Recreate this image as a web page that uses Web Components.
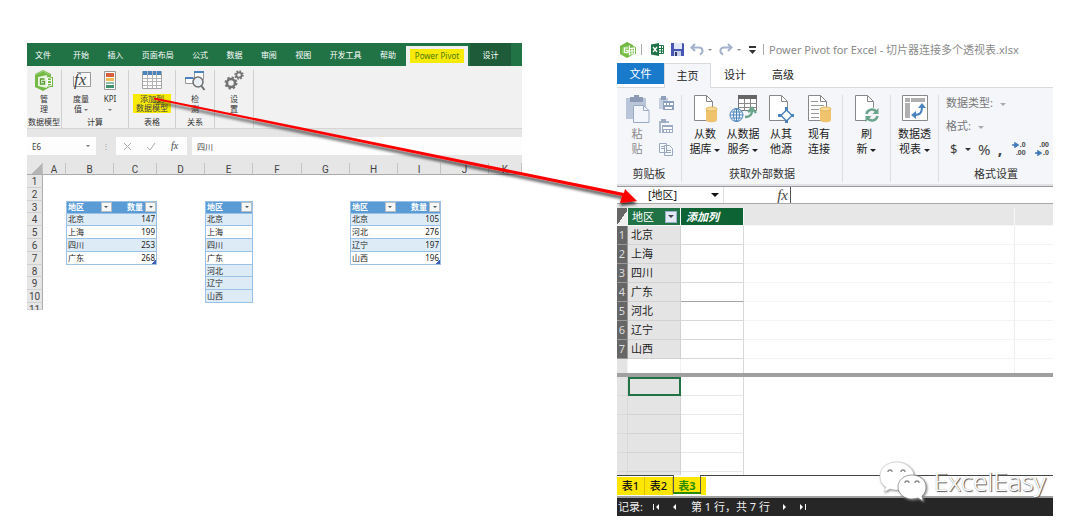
<!DOCTYPE html>
<html lang="zh-CN">
<head>
<meta charset="utf-8">
<title>Power Pivot</title>
<style>
body{margin:0;background:#fff;color:#333;font-family:"Noto Sans","Noto Sans CJK SC",sans-serif;font-size:11px}
</style>
</head>
<body>
<demo-page></demo-page>
<script>
const define=(name,html,init)=>customElements.define(name,class extends HTMLElement{
  constructor(){super();const t=document.createElement('template');t.innerHTML=html;this.attachShadow({mode:'open'}).append(t.content.cloneNode(true));}
  connectedCallback(){if(init)init(this,this.shadowRoot);}
});

/* small drop-down triangle */
define('drop-caret',`<style>:host{display:inline-block;vertical-align:middle;width:0;height:0;border:var(--caret,3px) solid transparent;border-top-color:currentColor;border-bottom-width:0}</style>`);

/* ribbon group: items above, caption below, separator on the right */
define('ribbon-group',`<style>
:host{display:flex;flex-direction:column;box-sizing:border-box;border-right:1px solid var(--sep,#dcdee0);flex:none}
:host([last]){border-right:0;flex:1}
.items{flex:1;display:flex;justify-content:center}
.cap{text-align:center;line-height:var(--cap,14px);white-space:nowrap;margin:0 -4px}
</style><div class="items"><slot></slot></div><div class="cap"><slot name="caption"></slot></div>`);

/* large ribbon command: icon over a two-line label */
define('ribbon-button',`<style>
:host{display:block;flex:none}
button{all:unset;box-sizing:border-box;width:100%;display:flex;flex-direction:column;align-items:center;cursor:pointer}
.ic{height:var(--icon,31px);display:flex;align-items:flex-start;justify-content:center}
.tx{text-align:center;line-height:var(--line,15px);white-space:nowrap}
</style><button><span class="ic"><slot name="icon"></slot></span><span class="tx"><slot></slot></span></button>`);

/* banded table with filter buttons */
define('sheet-table',`<style>
:host{display:block;font-size:8px;line-height:10px;color:#222;z-index:1}
table{width:100%;height:100%;border-collapse:collapse;table-layout:fixed;border:1px solid #9bc2e6}
th,td{padding:0 1px;text-align:left;border-bottom:1px solid #9bc2e6;white-space:nowrap;overflow:hidden;height:11px}
th{background:#5b9bd5;color:#fff;font-weight:700;padding-right:0}
th div{display:flex;align-items:center;justify-content:space-between}
.n{text-align:right}
th.n div{justify-content:flex-end;gap:2px}
tbody tr:nth-child(odd) td{background:#ddebf7}
:host([added]) tbody tr:nth-child(n+5) td{background:#ddebf7}
button{all:unset;width:11px;height:10px;background:#f7f7f7;border:1px solid #b5bcc4;box-sizing:border-box;display:flex;align-items:center;justify-content:center;color:#555;--caret:2px}
tbody tr:last-child td:last-child{background-image:linear-gradient(135deg,transparent 50%,#3f5fb5 50%);background-size:4px 4px;background-position:right bottom;background-repeat:no-repeat}
</style><table><thead><tr></tr></thead><tbody></tbody></table>`,(el,r)=>{
  r.querySelector('thead tr').innerHTML=el.getAttribute('head').split(',').map((h,i)=>`<th class="${i?'n':''}"><div><span>${h}</span><button aria-label="筛选${h}"><drop-caret></drop-caret></button></div></th>`).join('');
  r.querySelector('tbody').innerHTML=el.getAttribute('rows').split(' ').map(x=>'<tr>'+x.split(':').map((c,i)=>`<td class="${i?'n':''}">${c}</td>`).join('')+'</tr>').join('');
});

define('excel-window',`<style>
:host{display:block;font-size:8px;line-height:10px;min-width:0;background:#fff}
button{all:unset;cursor:pointer;white-space:nowrap}
.tabs{display:flex;height:23px;background:#217346;color:#fff;align-items:stretch}
.tabs button{display:flex;align-items:center}
.file{width:32px;justify-content:center}
nav{flex:1;display:flex;justify-content:space-between;padding:0 10px 0 14px}
.tabs .pp{box-sizing:border-box;width:62px;margin-top:3px;background:#f1f1f1;justify-content:center;color:#4f7a00}
.pp span{background:#f7ea06;padding:2px 5px}
.tabs .ds{width:41px;margin:0 11px 0 2px;background:#1e5b39;justify-content:center}
.ribbon{display:flex;height:63px;box-sizing:border-box;background:#f1f1f1;border-bottom:1px solid #d5d5d5;padding:4px 0 0;--icon:24px;--line:10px;--caret:2px;--cap:12px;--sep:#d0d0d0}
ribbon-group drop-caret{color:#777}
mark{display:block;background:#f7ea06;color:#444;padding:0 3px 1px;line-height:9px}
.bar{background:#e6e6e6;padding:8px 0;display:grid;grid-template-columns:69px 10px 71px minmax(0,1fr);column-gap:5px;height:34px;box-sizing:border-box}
.bar>*{min-width:0}
.nm,.val,.ops{background:#fdfdfd;display:flex;align-items:center;color:#444}
input{all:unset;width:100%;min-width:0;height:18px;padding-left:5px;box-sizing:border-box}
.nm drop-caret{margin-right:6px;--caret:2px;color:#777}
.ops{justify-content:space-around}
.dots{display:flex;align-items:center;justify-content:center;color:#999}
.sheet{display:grid;grid-template-columns:16fr 23fr 48fr 43fr 48fr 48fr 49fr 48fr 48fr 43fr 48fr 33fr;grid-template-rows:12px repeat(10,minmax(0,1fr)) 7px;height:147px;overflow:hidden}
.c,.r{background:#e6e6e6;color:#444;font:10px/13px Roboto,sans-serif;text-align:center;box-sizing:border-box}
.c{grid-row:1;border-right:1px solid #c3c3c3;border-bottom:1px solid #ababab}
.r{grid-column:1;border-right:1px solid #ababab;border-bottom:1px solid #cfcfcf}
.corner{background:linear-gradient(135deg,#e6e6e6 60%,#b5b5b5 60%)}
</style>
<div class="tabs"><button class="file">文件</button><nav>${'开始 插入 页面布局 公式 数据 审阅 视图 开发工具 帮助'.split(' ').map(t=>`<button>${t}</button>`).join('')}</nav><button class="pp"><span>Power Pivot</span></button><button class="ds">设计</button></div>
<div class="ribbon">
<ribbon-group style="width:35px"><ribbon-button><svg slot="icon" width="20" height="21" viewBox="0 0 20 21"><path d="M9 0 17 4v3h2v10h-3l-7 4-8-4V4z" fill="#73b944"/><path d="M1 5 9 1l7 4" stroke="#a4d583" fill="none"/><path d="M4 7l9-2v13l-9-2z" fill="#e9f4e1"/><path d="M10.500 9H6.500v5h4v-2.500H8" stroke="#5a9c34" stroke-width="1.300" fill="none"/><path d="M13.500 7.500l4 .8v7l-4 1zM13.500 10.500h4M13.500 13.500h4" stroke="#fff" fill="none"/></svg>管<br>理</ribbon-button><span slot="caption">数据模型</span></ribbon-group>
<ribbon-group style="width:67px"><ribbon-button style="width:30px"><svg slot="icon" width="19" height="20" viewBox="0 0 19 20"><path d="M5 2.500h13.500v14H1.500V6" stroke="#999" fill="#fafafa"/><text x="2" y="15" font-family="Liberation Serif" font-style="italic" font-size="17" fill="#444">fx</text></svg>度量<br>值 <drop-caret></drop-caret></ribbon-button><ribbon-button style="width:28px"><svg slot="icon" width="14" height="21" viewBox="0 0 14 21"><path d="M1.500 1.500h11v18h-11z" fill="#fff" stroke="#999"/><path d="M3 3h8v4H3z" fill="#d9603f"/><path d="M3 8h8v3H3z" fill="#efbb55"/><path d="M3 12h8v2H3z" fill="#8abfa5"/><path d="M3 15h8v3H3z" fill="#3f9170"/></svg>KPI<br><drop-caret></drop-caret></ribbon-button><span slot="caption">计算</span></ribbon-group>
<ribbon-group style="width:47px"><ribbon-button><svg slot="icon" width="20" height="20" viewBox="0 0 20 20"><path d="M.5 1.500h19v17H.5z" fill="#fff" stroke="#a4a4a4"/><path d="M1 1h18v4H1z" fill="#4b84bd"/><path d="M5.500 1v17M10.500 1v17M14.500 1v17M1 8.500h18M1 11.500h18M1 15.500h18" stroke="#b5b5b5"/></svg><mark>添加到<br>数据模型</mark></ribbon-button><span slot="caption">表格</span></ribbon-group>
<ribbon-group style="width:39px"><ribbon-button><svg slot="icon" width="22" height="21" viewBox="0 0 22 21"><path d="M10.500 1.500h9v8h-9zM1.500 7.500h8v6h-8z" fill="#fff" stroke="#999"/><path d="M10 1h10v2H10zM1 7h8v2H1z" fill="#4b84bd"/><circle cx="14" cy="12" r="5" fill="#e9f0f5" stroke="#707070" stroke-width="1.500"/><path d="m17.500 16 3 4" stroke="#707070" stroke-width="2"/></svg>检<br>测</ribbon-button><span slot="caption">关系</span></ribbon-group>
<ribbon-group style="width:39px"><ribbon-button><svg slot="icon" width="20" height="20" viewBox="0 0 20 20" fill="none" stroke="#737373"><circle cx="7" cy="13" r="4" stroke-width="2.500"/><circle cx="7" cy="13" r="5.500" stroke-width="2" stroke-dasharray="2.200 2.120"/><circle cx="15" cy="5" r="2.700" stroke-width="1.800"/><circle cx="15" cy="5" r="4" stroke-width="1.500" stroke-dasharray="1.600 1.540"/></svg>设<br>置</ribbon-button></ribbon-group>
</div>
<div class="bar"><label class="nm"><input value="E6" aria-label="名称框"><drop-caret></drop-caret></label><span class="dots">⋮</span><div class="ops"><svg width="9" height="9" stroke="#aaa" fill="none"><path d="m1 1 7 7M8 1 1 8"/></svg><svg width="10" height="9" stroke="#aaa" fill="none"><path d="m1 5 3 3 5-7"/></svg><svg width="10" height="12"><text x="1" y="9" font-family="Liberation Serif" font-style="italic" font-size="10" fill="#444">fx</text></svg></div><label class="val"><input value="四川" aria-label="编辑栏"></label></div>
<div class="sheet"><div class="c corner"></div>${[...'ABCDEFGHIJK'].map((c,i)=>`<div class="c" style="grid-column:${i+2}">${c}</div>`).join('')}${[1,2,3,4,5,6,7,8,9,10,11].map(n=>`<div class="r" style="grid-row:${n+1}">${n}</div>`).join('')}
<sheet-table style="grid-area:4/3/9/5" head="地区,数量" rows="北京:147 上海:199 四川:253 广东:268"></sheet-table>
<sheet-table added style="grid-area:4/6/12/7" head="地区" rows="北京 上海 四川 广东 河北 辽宁 山西"></sheet-table>
<sheet-table style="grid-area:4/9/9/11" head="地区,数量" rows="北京:105 河北:276 辽宁:197 山西:196"></sheet-table></div>`);

const page='<path d="M1.500 .5h12l6 6v19h-18z" fill="#fff" stroke="#888"/><path d="M13.500 .5v6h6" fill="none" stroke="#888"/>';
const drum='<path d="M13 14v11c0 3 11 3 11 0V14z" fill="#efc36d"/><ellipse cx="18.500" cy="14" rx="5.500" ry="2" fill="#f7d997" stroke="#e5b455"/>';

define('pivot-ribbon',`<style>
:host{display:flex;height:97px;box-sizing:border-box;background:#f4f6f9;border-top:1px solid #d9dbde;padding:7px 0 2px}
ribbon-group{--cap:16px}
ribbon-button{color:#222}
.off{color:#888}
.small{display:flex;flex-direction:column;gap:7px;padding-top:1px;margin-left:8px}
button{all:unset;cursor:pointer;display:block}
.small button{height:16px}
.fmt{flex:1;padding:0 7px;line-height:16px;color:#777}
.fmt button{white-space:nowrap}
.fmt .row{display:flex;align-items:center;justify-content:space-between;height:16px;color:#444;font-size:13px;margin:7px -3px 0 4px}
.fmt .f1{margin-bottom:7px}
.fmt drop-caret{--caret:3px;margin-left:4px;color:#aaa}
.fmt .row drop-caret{margin:0;color:#333}
.row .pct{font-size:15px}
.row .comma{font-size:16px}
.dec{display:grid;grid-template-columns:auto auto;font:700 7px/8px "Liberation Sans",sans-serif;justify-content:end;align-items:center;width:16px}
.dec .w{grid-column:1/3;text-align:right}
</style>
<ribbon-group style="width:65px"><ribbon-button class="off"><svg slot="icon" width="25" height="29" viewBox="0 0 25 29"><path d="M1 3h20v21H1z" fill="#b9c6da"/><path d="M5 2h4V0h5v2h4v5H5z" fill="#8c9bb3"/><path d="M8.500 10.500h10l5.500 5v12H8.500z" fill="#f2f6fc" stroke="#9baac4"/><path d="M18.500 10.500v5H24" fill="none" stroke="#9baac4"/></svg>粘<br>贴</ribbon-button><div class="small">
<button aria-label="粘贴追加"><svg width="16" height="15"><path d="M1 2h9v11H1z" fill="#c3cede"/><path d="M3 0h5v4H3zM5 5h11v9H5z" fill="#8fa0ba"/><path d="M6 7h2v2H6zM9 7h2v2H9zM12 7h3v2h-3zM7 11h7v2H7z" fill="#fff"/></svg></button>
<button aria-label="粘贴替换"><svg width="16" height="15"><path d="M1 2h2v12H1zM1 2h10v2H1z" fill="#a9b6cb"/><path d="M3 0h5v4H3zM4 6h11v8H4z" fill="#9cabc2"/><path d="M5 8h9v2H5zM6 11h2v2H6zM9 11h2v2H9zM12 11h2v2h-2z" fill="#fff"/></svg></button>
<button aria-label="复制"><svg width="16" height="15" fill="#f5f8fc" stroke="#9aa9c0"><path d="M1.500 1.500h7v9h-7zM6.500 3.500h5l3 3v7h-8z"/><path d="M8 8.500h5M8 10.500h5M3 4.500h3M3 6.500h3"/></svg></button></div><span slot="caption">剪贴板</span></ribbon-group>
<ribbon-group style="width:161px"><ribbon-button style="width:38px"><svg slot="icon" width="25" height="28" viewBox="0 0 25 28">${page}${drum}</svg>从数<br>据库 <drop-caret></drop-caret></ribbon-button>
<ribbon-button style="width:38px"><svg slot="icon" width="29" height="28" viewBox="0 0 29 28"><path d="M9.500 .5h18v15h-18z" fill="#fff" stroke="#777"/><path d="M9 0h19v4H9z" fill="#666"/><path d="M15.500 4v12M21.500 4v12M10 8.500h18M10 12.500h18" stroke="#888"/><circle cx="7.500" cy="20" r="6.500" fill="#f4f8fc" stroke="#4b84bd"/><ellipse cx="7.500" cy="20" rx="3" ry="6.500" fill="none" stroke="#4b84bd"/><path d="M1 20h13M2 17h11M2 23h11M7.500 14v13" stroke="#4b84bd"/><path d="M16 22c5 0 7-2 7-7M19 17l4-4 4 5" fill="none" stroke="#6aa48b" stroke-width="2.500"/></svg>从数据<br>服务 <drop-caret></drop-caret></ribbon-button>
<ribbon-button style="width:38px"><svg slot="icon" width="26" height="28" viewBox="0 0 26 28">${page}<path d="M18.500 12v16M10 20.500h16" stroke="#4b84bd" stroke-width="3"/><path d="m18.500 15 5.500 5.500-5.500 5.500-5.500-5.500z" fill="#fff" stroke="#4b84bd" stroke-width="1.500"/></svg>从其<br>他源</ribbon-button>
<ribbon-button style="width:38px"><svg slot="icon" width="25" height="28" viewBox="0 0 25 28">${page}<path d="M4 6.500h7M4 10.500h13M4 14.500h8M4 18.500h8M4 22.500h8" stroke="#999"/>${drum}</svg>现有<br>连接</ribbon-button><span slot="caption">获取外部数据</span></ribbon-group>
<ribbon-group style="width:48px"><ribbon-button><svg slot="icon" width="25" height="28" viewBox="0 0 25 28">${page}<circle cx="18" cy="20" r="7.500" fill="#f4f6f9"/><path d="M12.500 19a5.500 5.500 0 0 1 10-2M23.500 21a5.500 5.500 0 0 1-10 2" fill="none" stroke="#6aa48b" stroke-width="2.500"/><path d="M24.500 13v6h-6zM11.500 27v-6h6z" fill="#6aa48b"/></svg>刷<br>新 <drop-caret></drop-caret></ribbon-button></ribbon-group>
<ribbon-group style="width:48px"><ribbon-button><svg slot="icon" width="26" height="27" viewBox="0 0 26 27"><path d="M.5 .5h25v25H.5z" fill="#fff" stroke="#888"/><path d="M3 3h5v4H3zM9 3h14v4H9zM3 8h5v15H3z" fill="#b0b0b0"/><path d="M12 20c6 0 8-2 8-8" fill="none" stroke="#4b84bd" stroke-width="2"/><path d="m16 13 4-5 4 5zM14 16l-5 4 5 4z" fill="#4b84bd"/></svg>数据透<br>视表 <drop-caret></drop-caret></ribbon-button></ribbon-group>
<ribbon-group last><div class="fmt"><button class="f1">数据类型: <drop-caret></drop-caret></button><button>格式: <drop-caret></drop-caret></button><div class="row"><button>$</button><drop-caret></drop-caret><button class="pct">%</button><button class="comma"><b>,</b></button>
<button aria-label="增加小数位"><span class="dec"><svg width="8" height="6"><path d="M0 3h4M3 1l3 2-3 2z" stroke="#3e78b8" stroke-width="1.500" fill="#3e78b8"/></svg><span>.0</span><span class="w">.00</span></span></button><button aria-label="减少小数位"><span class="dec"><span class="w">.00</span><svg width="8" height="6"><path d="M0 3h4M3 1l3 2-3 2z" stroke="#3e78b8" stroke-width="1.500" fill="#3e78b8"/></svg><span>.0</span></span></button></div></div><span slot="caption">格式设置</span></ribbon-group>`);

define('pivot-grid',`<style>
:host{display:block}
table{width:100%;border-collapse:separate;border-spacing:0;table-layout:fixed;line-height:18px}
th,td{box-sizing:border-box;height:19px;padding:0;border-right:1px solid #eee;border-bottom:1px solid #f4f4f4;text-align:left;font-weight:400;white-space:nowrap}
tr>:last-child{border-right:0}
thead th{height:18px;line-height:17px;background:#e7e7e7;border-color:#f7f7f7}
thead th.a{background:#217346;color:#fff;padding:0 3px 0 4px}
thead th.b{background:#0d6333;color:#fff;font-weight:700;font-style:italic;padding-left:5px}
thead th.z{background:linear-gradient(125deg,#666 55%,#eee 55%)}
.a div{display:flex;justify-content:space-between;align-items:center}
button{all:unset;width:12px;height:12px;box-sizing:border-box;border:1px solid #9bb0cc;background:#e3e9f5;display:flex;align-items:center;justify-content:center;color:#445;--caret:3px}
tbody th{background:#666;color:#ddd;text-align:center;border-color:#999}
tbody td:nth-child(2){background:#e4e4e4;color:#222;padding-left:3px;border-color:#d2d2d2}
td:nth-child(3){border-color:#d8d8d8}
.up tbody tr:nth-child(4) td:nth-child(3){border-bottom-color:#a5a5a5}
tfoot td{height:14px;border-bottom:0;border-color:#f2f2f2}
tfoot td:first-child{background:#e4e4e4}
.split{height:4px;background:#a0a0a0}
.low{height:98px;overflow:hidden}
.low td:nth-child(1){background:#e4e4e4;border-color:#d8d8d8}
.low td:nth-child(n+4){border:0}
.low td:nth-child(3){border-bottom-color:#e8e8e8}
.low tr:first-child td:nth-child(2){border:2px solid #217346}
</style>
<table class="up"><colgroup><col style="width:11px"><col style="width:53px"><col style="width:63px"><col><col style="width:38px"></colgroup>
<thead><tr><th class="z"></th><th class="a"><div>地区<button aria-label="筛选"><drop-caret></drop-caret></button></div></th><th class="b">添加列</th><th></th><th></th></tr></thead>
<tbody>${'北京 上海 四川 广东 河北 辽宁 山西'.split(' ').map((n,i)=>`<tr><th>${i+1}</th><td>${n}</td><td></td><td></td><td></td></tr>`).join('')}</tbody>
<tfoot><tr><td></td><td></td><td></td><td></td><td></td></tr></tfoot></table>
<div class="split"></div>
<div class="low"><table><colgroup><col style="width:11px"><col style="width:53px"><col style="width:63px"><col><col style="width:38px"></colgroup><tbody>${'<tr><td></td><td></td><td></td><td></td><td></td></tr>'.repeat(6)}</tbody></table></div>`);

define('pivot-window',`<style>
:host{display:block;min-width:0;background:#fff;line-height:16px}
button{all:unset;cursor:pointer;white-space:nowrap}
.title{display:flex;align-items:center;height:27px;color:#8a8a8a;padding-left:3px}
.title svg{flex:none}
.title h1{margin:0 0 0 5px;font:inherit;white-space:nowrap}
.title i{width:1px;height:11px;background:#aaa}
.tabs{display:flex;height:24px;color:#222}
.tabs button{width:48px;text-align:center;line-height:22px;height:24px}
.tabs .f{background:#1979ca;color:#fff;height:21px;width:47px}
.tabs .on{background:#f4f6f9;border:1px solid #d9dbde;border-bottom:0;box-sizing:border-box;height:25px;z-index:1;width:47px;line-height:20px}
.fx{display:grid;grid-template-columns:107px 67px minmax(0,1fr);height:18px;box-sizing:border-box;border-top:1px solid #999;border-bottom:1px solid #aaa;box-shadow:0 -2px #dfe1e4;margin-top:2px}
.nm{display:flex;align-items:center;border-right:1px solid #ddd;color:#111}
select{all:unset;width:100%;padding-left:31px;box-sizing:border-box}
.nm drop-caret{margin-right:4px;--caret:4px}
.fn{text-align:right;font:italic 15px/16px "Liberation Serif",serif;color:#444;padding-right:2px;border-right:1px solid #555}
.fx input{all:unset;min-width:0}
.gap{height:4px;background:#e7e7e7}
.sheets{display:flex;height:21px;box-sizing:border-box;background:linear-gradient(#444 1px,#fff 1px)}
.sheets button{box-sizing:border-box;width:28px;height:18px;margin-top:2px;background:#ffe600;color:#111;font-weight:500;text-align:center;line-height:18px;border-right:1px solid #d8c200}
.sheets .on{color:#2a8a00;font-weight:700;height:19px;line-height:21px;margin-top:0;border:1px solid #555;border-top:0;border-bottom:2px solid #2a8a00;background:linear-gradient(#fff 2px,#ffe600 2px)}
.sheets s{width:5px;margin-top:2px;background:#ffe600;height:18px}
.status{display:flex;align-items:center;height:18px;background:#262626;color:#eee;border-top:2px solid #a0a0a0;padding-left:1px;line-height:18px}
.status span{white-space:nowrap}
.status button{height:18px;display:flex;align-items:center}
</style>
<div class="title">
<svg width="16" height="16" viewBox="0 0 16 16"><path d="M7 0 13 3v1l3 1v7l-3 .5-6 3.500-7-4V4z" fill="#73b944"/><path d="M2 5.500l7-2v9.500l-7-2z" fill="#8fce63"/><path d="M8 6H4.500v4.500H8V8.500H6M9.500 3.500v10M9.500 6.500l5-.5v5.500l-5 .5M12 6v6M9.500 9h5" stroke="#fff" stroke-width="1.200" fill="none"/></svg><i style="margin:0 9px 0 5px"></i>
<svg width="13" height="13" viewBox="0 0 13 13"><path d="M0 1.500 8 0v13l-8-1.500z" fill="#1f7246"/><path d="m2 4 4 5M6 4 2 9" stroke="#fff" stroke-width="1.300"/><path d="M8 2.500h4.500v8H8M8 5.500h4M8 8h4M10.500 3v7" stroke="#1f7246" fill="none"/></svg>
<svg width="13" height="13" viewBox="0 0 13 13" style="margin:0 6px 0 7px"><path d="M0 0h12l1 1v12H0z" fill="#4557b0"/><path d="M3 0h8v6H3z" fill="#e3e8f8"/><path d="M3 8h7v5H3z" fill="#c6cee8"/><path d="M4 9h2v4H4z" fill="#333c70"/></svg>
<svg width="15" height="13" viewBox="0 0 15 13" fill="none" stroke="#a4b2cb" stroke-width="2"><path d="M5 1 1.500 4.500 5 8M2 4.500h7c4 0 5 5 1 7"/></svg>
<drop-caret style="--caret:2px;margin:0 7px 0 3px"></drop-caret>
<svg width="14" height="13" viewBox="0 0 14 13" fill="none" stroke="#a4b2cb" stroke-width="2"><path d="m9 1 3.500 3.500L9 8M12 4.500H5c-4 0-5 5-1 7"/></svg>
<drop-caret style="--caret:2px;margin:0 8px 0 4px"></drop-caret>
<svg width="7" height="8"><path d="M0 0h7v2H0zM0 4h7L3.500 8z" fill="#333"/></svg><i style="margin-left:7px"></i>
<h1>Power Pivot for Excel - 切片器连接多个透视表.xlsx</h1></div>
<div class="tabs"><button class="f">文件</button><button class="on">主页</button><button>设计</button><button>高级</button></div>
<pivot-ribbon></pivot-ribbon>
<div class="fx"><label class="nm"><select aria-label="列"><option>[地区]</option></select><drop-caret></drop-caret></label><span class="fn">fx</span><input aria-label="公式"></div>
<div class="gap"></div>
<pivot-grid></pivot-grid>
<div class="sheets"><button>表1</button><button>表2</button><button class="on">表3</button><s></s></div>
<div class="status"><span>记录:</span>
<button aria-label="首条" style="margin-left:10px"><svg width="7" height="6" fill="#fff"><path d="M0 0h1v6H0zM6 0v6L3 3z"/></svg></button>
<button aria-label="上一条" style="margin-left:12px"><svg width="5" height="6" fill="#fff"><path d="M4 0v6L1 3z"/></svg></button>
<span style="margin:0 12px 0 14px">第 1 行，共 7 行</span>
<button aria-label="下一条"><svg width="5" height="6" fill="#fff"><path d="M1 0v6l3-3z"/></svg></button>
<button aria-label="末条" style="margin-left:12px"><svg width="7" height="6" fill="#fff"><path d="M1 0v6l3-3zM6 0h1v6H6z"/></svg></button></div>`);

/* watermark over the lower right corner */
define('brand-mark',`<style>
:host{display:flex;align-items:center;gap:5px;font:300 26px/36px "Noto Sans","Open Sans",sans-serif;color:#fff;text-shadow:1px 1px 1px #555,0 0 1px #aaa}
svg{filter:drop-shadow(1px 1px 1px #888)}
</style><svg width="50" height="42" viewBox="0 0 50 42"><path d="M18 2C8 2 1 8 1 16c0 5 2 9 6 11l-2 5 6-3c3 1 6 1 9 1 9-1 15-7 15-14S27 2 18 2z" fill="#fff" stroke="#bbb" stroke-width=".5"/><path d="M33 15c-8 0-14 5-14 12s7 12 14 12l6-1 5 3-1-5c3-2 4-6 4-9 0-7-6-12-14-12z" fill="#fff" stroke="#777" stroke-width=".7"/><g fill="none" stroke="#888" stroke-width="1.300"><path d="M9 12a2 2 0 0 1 4 0M22 12a2 2 0 0 1 4 0M26 23a2 2 0 0 1 4 0M36 23a2 2 0 0 1 4 0"/></g></svg><span>ExcelEasy</span>`);

define('demo-page',`<style>
:host{display:block;position:relative;overflow:hidden}
main{display:grid;grid-template-columns:minmax(0,495fr) minmax(0,436fr);column-gap:95px;align-items:start;padding:36px 27px 16px}
excel-window{margin-top:7px}
.arrow{position:absolute;left:0;top:0;width:100%;height:532px;pointer-events:none;z-index:5}
brand-mark{position:absolute;right:34px;bottom:30px;z-index:4}
</style><main><excel-window></excel-window><pivot-window></pivot-window></main>
<svg class="arrow" viewBox="0 0 1080 532" preserveAspectRatio="xMinYMin meet"><defs><filter id="s" x="-5%" y="-20%" width="110%" height="150%"><feDropShadow dx="0" dy="3" stdDeviation="1.500" flood-color="#000" flood-opacity=".7"/></filter></defs><path d="M154 97.500 624 193 625 189 637 201 620 203 622 196 154 99.500z" fill="#f00" filter="url(#s)"/></svg>
<brand-mark></brand-mark>`);
</script>
</body>
</html>
